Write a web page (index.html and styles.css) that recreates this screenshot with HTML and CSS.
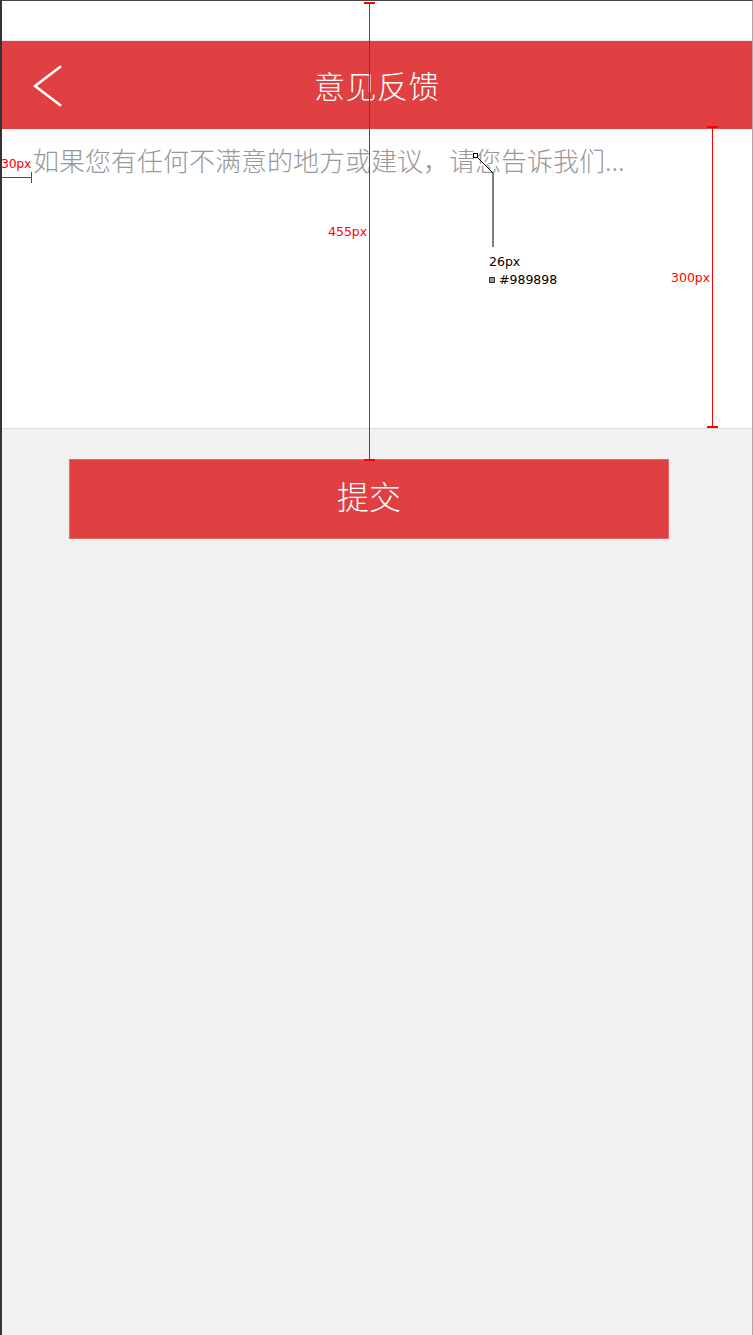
FILE: index.html
```html
<!DOCTYPE html>
<html lang="zh-CN">
<head>
<meta charset="utf-8">
<title>意见反馈</title>
<link rel="stylesheet" href="styles.css">
</head>
<body>
<div class="frame">
  <div class="status"></div>
  <header class="navbar">
    <button class="back" aria-label="返回">
      <svg width="32" height="42" viewBox="0 0 32 42"><polyline points="28,2 3,21 28,40" fill="none" stroke="#fff" stroke-width="2.6" stroke-linecap="square"/></svg>
    </button>
    <h1 class="title">意见反馈</h1>
  </header>
  <div class="editor">
    <div class="placeholder">如果您有任何不满意的地方或建议，请您告诉我们...</div>
  </div>
  <div class="actions">
    <button class="submit">提交</button>
  </div>

  <div class="anno vline v455"><span class="cap top"></span><span class="cap bottom"></span></div>
  <span class="anno red-label l455">455px</span>
  <div class="anno vline v300"><span class="cap top"></span><span class="cap bottom"></span></div>
  <span class="anno red-label l300">300px</span>
  <span class="anno red-label l30">30px</span>
  <div class="anno hline h30"><span class="hcap left"></span><span class="hcap right"></span></div>

  <svg class="anno leader" width="30" height="100" viewBox="0 0 30 100">
    <rect x="1.5" y="1.5" width="4" height="4" fill="#fff" stroke="#000" stroke-width="1"/>
    <polyline points="5,5 21,21 21,95" fill="none" stroke="#000" stroke-width="1"/>
  </svg>
  <div class="anno spec">
    <div>26px</div>
    <div class="swatch-row"><span class="swatch"></span>#989898</div>
  </div>
</div>
</body>
</html>
```

FILE: styles.css
```css
* { box-sizing: border-box; }
html, body { margin: 0; padding: 0; }
body { background: #f1f1f1; font-family: "Noto Sans CJK SC", "Noto Sans", sans-serif; }

.frame {
  position: relative;
  width: 753px;
  height: 1335px;
  background: #f1f1f1;
  border-top: 1px solid #464646;
  border-left: 2px solid #333;
  border-right: 1px solid #a8a8a8;
  display: flex;
  flex-direction: column;
  overflow: hidden;
}

.status {
  height: 40px;
  background: #fff;
  border-bottom: 1px solid #ececec;
  flex: none;
}

.navbar {
  height: 88px;
  background: #e04041;
  display: flex;
  align-items: center;
  justify-content: center;
  position: relative;
  flex: none;
}
.back {
  position: absolute;
  left: 30px;
  top: 24px;
  padding: 0;
  margin: 0;
  border: 0;
  background: none;
  width: 32px;
  height: 42px;
  display: block;
}
.back svg { display: block; }
.title {
  margin: 0;
  font-size: 31px;
  font-weight: 300;
  color: #fff;
  line-height: 40px;
  letter-spacing: 0.5px;
}

.editor {
  height: 300px;
  background: #fff;
  border-bottom: 1px solid #dcdcdc;
  padding: 13px 0 0 31px;
  flex: none;
}
.placeholder {
  font-size: 26px;
  font-weight: 300;
  line-height: 36px;
  color: #989898;
}

.actions {
  padding: 30px 0 0 67px;
}
.submit {
  width: 600px;
  height: 80px;
  background: #e04041;
  border: 1px solid #e66a6b;
  color: #fff;
  font-family: "Noto Sans CJK SC", sans-serif;
  font-size: 32px;
  font-weight: 300;
  line-height: 40px;
  padding: 0 0 8px 0;
  margin: 0;
  display: block;
}

/* annotations */
.anno { position: absolute; }
.vline { width: 1px; background: #f00; }
.v455 { left: 367px; top: 1px; height: 458px; }
.v300 { left: 710px; top: 125px; height: 301px; }
.cap { position: absolute; left: -5px; width: 11px; height: 2px; background: #f00; }
.cap.top { top: 0; }
.cap.bottom { bottom: -1px; }

.red-label {
  font-family: "DejaVu Sans", sans-serif;
  font-size: 12.5px;
  color: #f00;
  line-height: 14px;
}
.l455 { left: 326px; top: 224px; }
.l300 { left: 669px; top: 270px; }
.l30 { left: -1px; top: 156px; letter-spacing: -0.3px; }

.hline { left: -2px; top: 176px; width: 32px; height: 1px; background: #f00; }
.hcap { position: absolute; top: -5px; width: 1px; height: 11px; background: #f00; }
.hcap.left { left: 0; }
.hcap.right { right: 0; }

.leader { left: 470px; top: 151px; }
.spec {
  left: 487px;
  top: 252px;
  font-family: "DejaVu Sans", sans-serif;
  font-size: 12.5px;
  line-height: 18px;
  color: #000;
}
.swatch-row { display: flex; align-items: center; gap: 4px; }
.swatch { width: 6px; height: 6px; background: #989898; border: 1px solid #333; }
```
